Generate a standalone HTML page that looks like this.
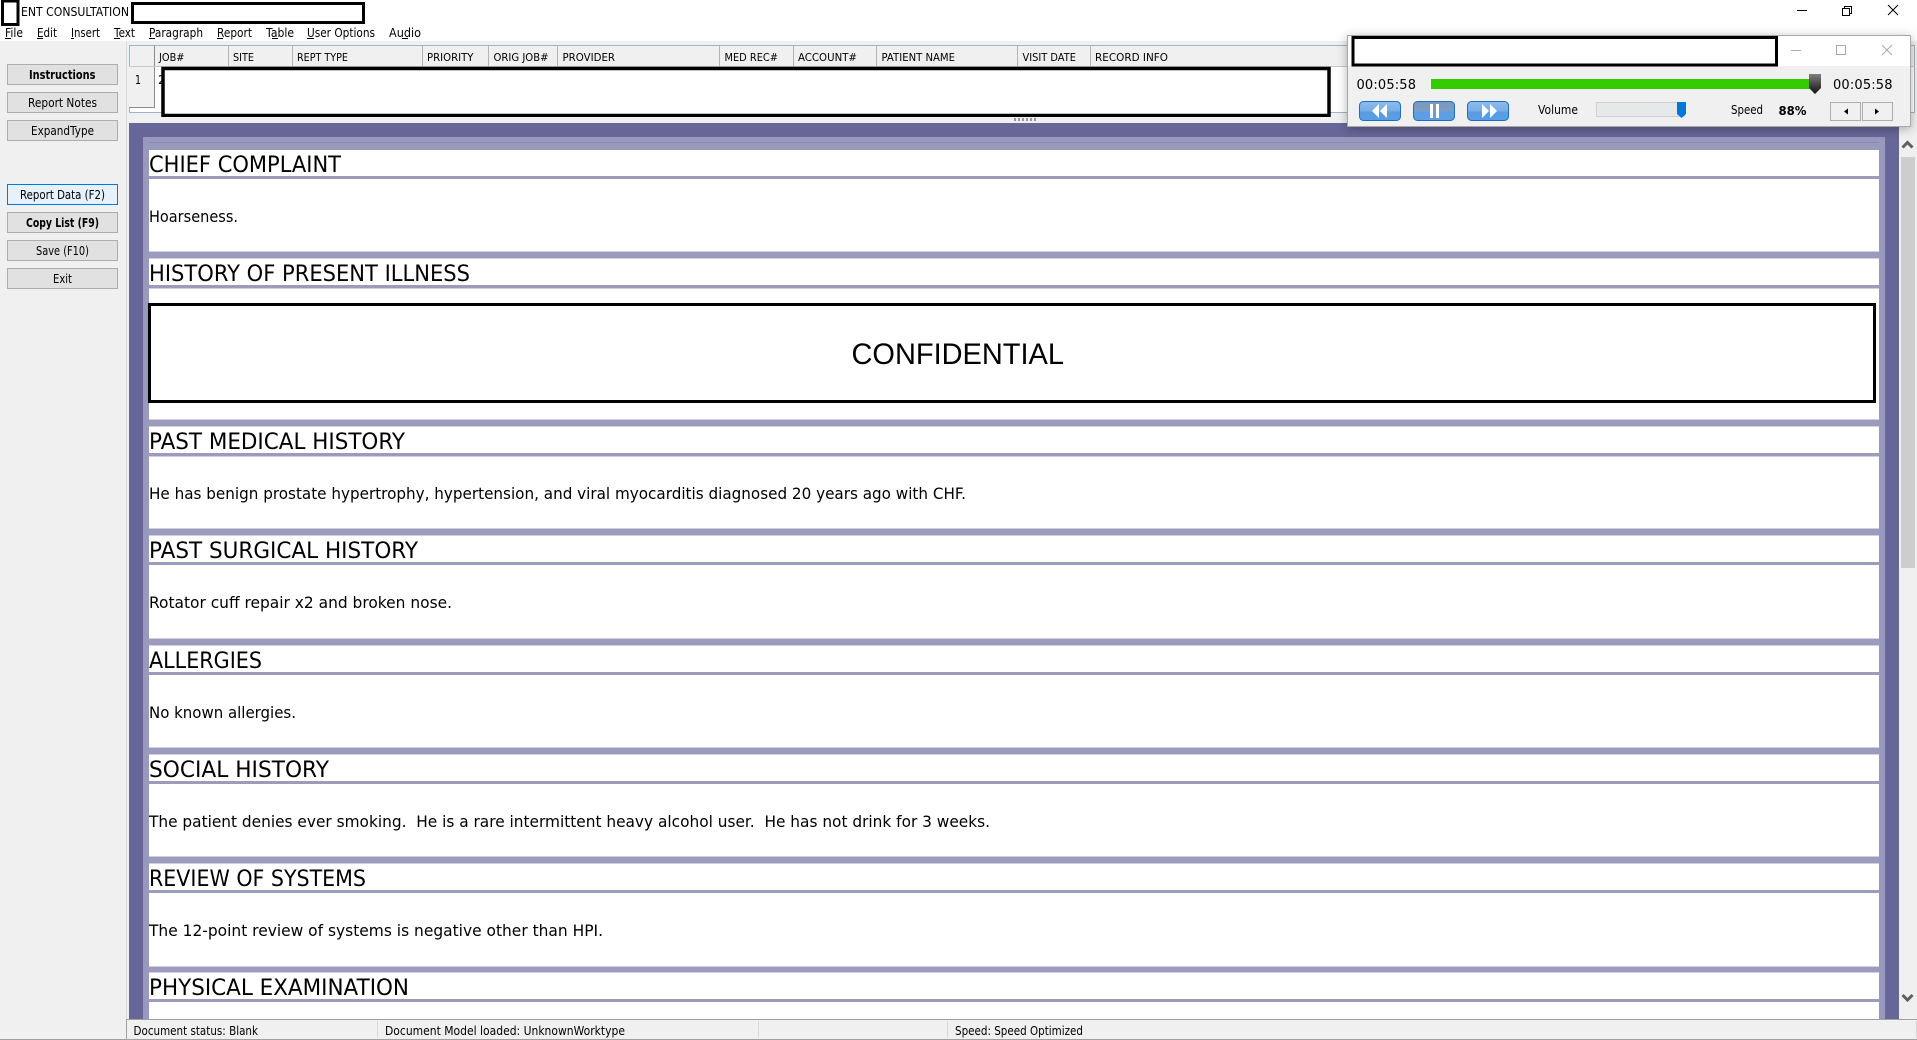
<!DOCTYPE html>
<html><head><meta charset="utf-8"><title>ENT CONSULTATION</title>
<style>
html,body{margin:0;padding:0;width:1917px;height:1040px;overflow:hidden;background:#fff}
svg{display:block;position:absolute;left:0;top:0}
text{font-family:"DejaVu Sans","Liberation Sans",sans-serif;fill:#000;white-space:pre;font-size:12px}
.h{font-size:22px}.b{font-size:16px}.m{font-size:12px}.g{font-size:11px}
.bb{font-weight:bold}
.t{font-size:13px}
</style></head><body>
<svg width="1917" height="1040" viewBox="0 0 1917 1040" xmlns="http://www.w3.org/2000/svg" shape-rendering="crispEdges">
<defs>
<linearGradient id="bl" x1="0" y1="0" x2="0" y2="1"><stop offset="0" stop-color="#8dbcec"/><stop offset=".5" stop-color="#78aee6"/><stop offset=".55" stop-color="#5a9ce2"/><stop offset="1" stop-color="#5a9de4"/></linearGradient>
<linearGradient id="pa" x1="0" y1="0" x2="0" y2="1"><stop offset="0" stop-color="#7d98bb"/><stop offset=".5" stop-color="#7b9cc4"/><stop offset=".55" stop-color="#5e9de0"/><stop offset="1" stop-color="#5e9fe4"/></linearGradient>
<linearGradient id="th" x1="0" y1="0" x2="0" y2="1"><stop offset="0" stop-color="#808080"/><stop offset="1" stop-color="#101010"/></linearGradient>
<filter id="sh" x="-5%" y="-20%" width="110%" height="140%"><feDropShadow dx="0" dy="2" stdDeviation="5" flood-color="#000" flood-opacity=".3"/></filter>
</defs>

<!-- base -->
<rect x="0" y="0" width="1917" height="41" fill="#fff"/>
<rect x="0" y="41" width="1917" height="999" fill="#f0f0f0"/>
<rect x="126" y="41" width="1" height="999" fill="#dcdcdc"/>

<!-- title -->
<rect x="2.5" y="1" width="15.5" height="23.5" fill="#fff" stroke="#000" stroke-width="3"/>
<text x="21" y="16" textLength="108" lengthAdjust="spacingAndGlyphs">ENT CONSULTATION</text>
<rect x="132.5" y="3.5" width="231" height="19" fill="#fff" stroke="#000" stroke-width="3"/>
<rect x="1797" y="10" width="10" height="1" fill="#000"/>
<rect x="1842.5" y="8.5" width="7" height="7" fill="none" stroke="#000"/>
<path d="M1844.5 8.5V6.5H1851.5V13.5H1849.5" fill="none" stroke="#000"/>
<path d="M1888 5L1898 15M1898 5L1888 15" stroke="#000" fill="none" shape-rendering="auto"/>

<!-- menu -->
<g class="m">
<text x="5" y="37" textLength="18" lengthAdjust="spacingAndGlyphs">File</text>
<text x="37" y="37" textLength="20" lengthAdjust="spacingAndGlyphs">Edit</text>
<text x="71" y="37" textLength="29" lengthAdjust="spacingAndGlyphs">Insert</text>
<text x="114" y="37" textLength="21" lengthAdjust="spacingAndGlyphs">Text</text>
<text x="149" y="37" textLength="54" lengthAdjust="spacingAndGlyphs">Paragraph</text>
<text x="217" y="37" textLength="35" lengthAdjust="spacingAndGlyphs">Report</text>
<text x="266" y="37" textLength="28" lengthAdjust="spacingAndGlyphs">Table</text>
<text x="307" y="37" textLength="68" lengthAdjust="spacingAndGlyphs">User Options</text>
<text x="389" y="37" textLength="32" lengthAdjust="spacingAndGlyphs">Audio</text>
</g>
<g fill="#000">
<rect x="5" y="38" width="6" height="1"/><rect x="37" y="38" width="6" height="1"/><rect x="71" y="38" width="3" height="1"/>
<rect x="114" y="38" width="6" height="1"/><rect x="149" y="38" width="6" height="1"/><rect x="217" y="38" width="6" height="1"/>
<rect x="272" y="38" width="6" height="1"/><rect x="307" y="38" width="7" height="1"/><rect x="402" y="38" width="6" height="1"/>
</g>

<!-- left buttons -->
<g fill="#e1e1e1" stroke="#adadad">
<rect x="7.5" y="64.5" width="110" height="20"/>
<rect x="7.5" y="92.5" width="110" height="20"/>
<rect x="7.5" y="120.5" width="110" height="20"/>
<rect x="7.5" y="212.5" width="110" height="20"/>
<rect x="7.5" y="240.5" width="110" height="20"/>
<rect x="7.5" y="268.5" width="110" height="20"/>
<rect x="7.5" y="184.5" width="110" height="20" fill="#e5f1fb" stroke="#0078d7"/>
</g>
<text class="bb" x="29" y="79" textLength="66.5" lengthAdjust="spacingAndGlyphs">Instructions</text>
<text x="28" y="107" textLength="69" lengthAdjust="spacingAndGlyphs">Report Notes</text>
<text x="31" y="135" textLength="63" lengthAdjust="spacingAndGlyphs">ExpandType</text>
<text x="20" y="199" textLength="85" lengthAdjust="spacingAndGlyphs">Report Data (F2)</text>
<text class="bb" x="26" y="227" textLength="73" lengthAdjust="spacingAndGlyphs">Copy List (F9)</text>
<text x="36" y="255" textLength="53" lengthAdjust="spacingAndGlyphs">Save (F10)</text>
<text x="53" y="283" textLength="19" lengthAdjust="spacingAndGlyphs">Exit</text>

<!-- grid -->
<rect x="129" y="45" width="1786" height="68" fill="#fff"/>
<rect x="129" y="46" width="1786" height="21" fill="#f0f0f0"/>
<rect x="129" y="45" width="1786" height="1" fill="#9fb4c8"/>
<rect x="129" y="112" width="1786" height="1" fill="#9fb4c8"/>
<rect x="129" y="45" width="1" height="68" fill="#9fb4c8"/>
<rect x="1914" y="45" width="1" height="68" fill="#9fb4c8"/>
<rect x="129" y="67" width="26" height="41" fill="#f0f0f0"/>
<rect x="154" y="46" width="1" height="62" fill="#8c8c8c"/>
<rect x="129" y="107" width="26" height="1" fill="#8c8c8c"/>
<g fill="#b4b4b4">
<rect x="228" y="46" width="1" height="21"/><rect x="292" y="46" width="1" height="21"/><rect x="422" y="46" width="1" height="21"/>
<rect x="488" y="46" width="1" height="21"/><rect x="557" y="46" width="1" height="21"/><rect x="719" y="46" width="1" height="21"/>
<rect x="793" y="46" width="1" height="21"/><rect x="876" y="46" width="1" height="21"/><rect x="1017" y="46" width="1" height="21"/>
<rect x="1090" y="46" width="1" height="21"/>
</g>
<rect x="129" y="66" width="1786" height="1" fill="#c8c8c8"/>
<g class="g">
<text class="g" x="159" y="61" textLength="25.5" lengthAdjust="spacingAndGlyphs">JOB#</text>
<text class="g" x="233" y="61" textLength="21" lengthAdjust="spacingAndGlyphs">SITE</text>
<text class="g" x="297" y="61" textLength="51" lengthAdjust="spacingAndGlyphs">REPT TYPE</text>
<text class="g" x="427" y="61" textLength="46.5" lengthAdjust="spacingAndGlyphs">PRIORITY</text>
<text class="g" x="493.5" y="61" textLength="55" lengthAdjust="spacingAndGlyphs">ORIG JOB#</text>
<text class="g" x="562.5" y="61" textLength="52.5" lengthAdjust="spacingAndGlyphs">PROVIDER</text>
<text class="g" x="724.5" y="61" textLength="53.5" lengthAdjust="spacingAndGlyphs">MED REC#</text>
<text class="g" x="798" y="61" textLength="59" lengthAdjust="spacingAndGlyphs">ACCOUNT#</text>
<text class="g" x="881.5" y="61" textLength="73.5" lengthAdjust="spacingAndGlyphs">PATIENT NAME</text>
<text class="g" x="1022.5" y="61" textLength="53.5" lengthAdjust="spacingAndGlyphs">VISIT DATE</text>
<text class="g" x="1095" y="61" textLength="73" lengthAdjust="spacingAndGlyphs">RECORD INFO</text>
</g>
<text x="135" y="84" textLength="6" lengthAdjust="spacingAndGlyphs">1</text>
<text x="158" y="84">2</text>
<rect x="163" y="68.5" width="1166" height="47" fill="#fff" stroke="#000" stroke-width="3.5" shape-rendering="auto"/>
<rect x="129" y="117" width="1770" height="6" fill="#f0f0f0"/>
<g fill="#9a9a9a">
<rect x="1014" y="118" width="2" height="3"/><rect x="1018" y="118" width="2" height="3"/><rect x="1022" y="118" width="2" height="3"/><rect x="1026" y="118" width="2" height="3"/><rect x="1030" y="118" width="2" height="3"/><rect x="1034" y="118" width="2" height="3"/>
</g>

<!-- document area -->
<rect x="129" y="123" width="1770" height="896" fill="#676699"/>
<rect x="143" y="137" width="1742" height="882" fill="#9998bd"/>
<rect x="149" y="142" width="1730" height="1" fill="#8a89b3"/>
<rect x="149" y="150" width="1730" height="869" fill="#fff"/>

<!-- bands & rules -->
<g fill="#9c9bbd">
<rect x="149" y="176" width="1730" height="3"/>
<rect x="149" y="252" width="1730" height="6"/>
<rect x="149" y="285" width="1730" height="3"/>
<rect x="149" y="420" width="1730" height="6"/>
<rect x="149" y="453" width="1730" height="3"/>
<rect x="149" y="529" width="1730" height="6"/>
<rect x="149" y="562" width="1730" height="3"/>
<rect x="149" y="639" width="1730" height="6"/>
<rect x="149" y="672" width="1730" height="3"/>
<rect x="149" y="748" width="1730" height="6"/>
<rect x="149" y="781" width="1730" height="3"/>
<rect x="149" y="857" width="1730" height="6"/>
<rect x="149" y="890" width="1730" height="3"/>
<rect x="149" y="967" width="1730" height="5"/>
<rect x="149" y="999" width="1730" height="3"/>
</g>
<g fill="#d0d0e2">
<rect x="149" y="251" width="1730" height="1"/><rect x="149" y="258" width="1730" height="1"/>
<rect x="149" y="419" width="1730" height="1"/><rect x="149" y="426" width="1730" height="1"/>
<rect x="149" y="528" width="1730" height="1"/><rect x="149" y="535" width="1730" height="1"/>
<rect x="149" y="638" width="1730" height="1"/><rect x="149" y="645" width="1730" height="1"/>
<rect x="149" y="747" width="1730" height="1"/><rect x="149" y="754" width="1730" height="1"/>
<rect x="149" y="856" width="1730" height="1"/><rect x="149" y="863" width="1730" height="1"/>
<rect x="149" y="966" width="1730" height="1"/><rect x="149" y="972" width="1730" height="1"/>
<rect x="149" y="288" width="1730" height="1"/><rect x="149" y="456" width="1730" height="1"/>
</g>

<!-- headings -->
<text class="h" x="149" y="172" textLength="192" lengthAdjust="spacingAndGlyphs">CHIEF COMPLAINT</text>
<text class="h" x="149" y="281" textLength="321" lengthAdjust="spacingAndGlyphs">HISTORY OF PRESENT ILLNESS</text>
<text class="h" x="149" y="449" textLength="256" lengthAdjust="spacingAndGlyphs">PAST MEDICAL HISTORY</text>
<text class="h" x="149" y="558" textLength="269" lengthAdjust="spacingAndGlyphs">PAST SURGICAL HISTORY</text>
<text class="h" x="149" y="668" textLength="113" lengthAdjust="spacingAndGlyphs">ALLERGIES</text>
<text class="h" x="149" y="777" textLength="180" lengthAdjust="spacingAndGlyphs">SOCIAL HISTORY</text>
<text class="h" x="149" y="886" textLength="217" lengthAdjust="spacingAndGlyphs">REVIEW OF SYSTEMS</text>
<text class="h" x="149" y="995" textLength="260" lengthAdjust="spacingAndGlyphs">PHYSICAL EXAMINATION</text>

<!-- bodies -->
<text class="b" x="149" y="222" textLength="89" lengthAdjust="spacingAndGlyphs">Hoarseness.</text>
<text class="b" x="149" y="499" textLength="817" lengthAdjust="spacingAndGlyphs">He has benign prostate hypertrophy, hypertension, and viral myocarditis diagnosed 20 years ago with CHF.</text>
<text class="b" x="149" y="608" textLength="303" lengthAdjust="spacingAndGlyphs">Rotator cuff repair x2 and broken nose.</text>
<text class="b" x="149" y="718" textLength="147" lengthAdjust="spacingAndGlyphs">No known allergies.</text>
<text class="b" x="149" y="827" textLength="841" lengthAdjust="spacingAndGlyphs">The patient denies ever smoking.  He is a rare intermittent heavy alcohol user.  He has not drink for 3 weeks.</text>
<text class="b" x="149" y="936" textLength="454" lengthAdjust="spacingAndGlyphs">The 12-point review of systems is negative other than HPI.</text>

<!-- confidential -->
<rect x="149.5" y="304.5" width="1725" height="97" fill="#fff" stroke="#000" stroke-width="3"/>
<text x="851.5" y="364" textLength="212.5" lengthAdjust="spacingAndGlyphs" style="font-family:'Liberation Sans',sans-serif;font-size:30px">CONFIDENTIAL</text>

<!-- scrollbar -->
<rect x="1899" y="123" width="18" height="896" fill="#f0f0f0"/>
<rect x="1901" y="157" width="14" height="411" fill="#cdcdcd"/>
<path d="M1902.5 147.5L1907.5 142.5L1912.5 147.5" fill="none" stroke="#606060" stroke-width="3" shape-rendering="auto"/>
<path d="M1902.5 995L1907.5 1000L1912.5 995" fill="none" stroke="#606060" stroke-width="3" shape-rendering="auto"/>

<!-- status -->
<rect x="127" y="1019" width="1790" height="1" fill="#a0a0a0"/>
<rect x="127" y="1020" width="1790" height="19" fill="#f0f0f0"/>
<rect x="0" y="1039" width="1917" height="1" fill="#a0a0a0"/>
<rect x="377" y="1021" width="1" height="17" fill="#d8d8d8"/>
<rect x="758" y="1021" width="1" height="17" fill="#d8d8d8"/>
<rect x="947" y="1021" width="1" height="17" fill="#d8d8d8"/>
<rect x="1916" y="1021" width="1" height="17" fill="#d8d8d8"/>
<rect x="126" y="1019" width="1" height="21" fill="#a0a0a0"/>
<text x="133.5" y="1035" textLength="124.5" lengthAdjust="spacingAndGlyphs">Document status: Blank</text>
<text x="385" y="1035" textLength="240" lengthAdjust="spacingAndGlyphs">Document Model loaded: UnknownWorktype</text>
<text x="955" y="1035" textLength="128" lengthAdjust="spacingAndGlyphs">Speed: Speed Optimized</text>

<!-- player window -->
<rect x="1347.5" y="35.5" width="563" height="91" fill="#f0f0f0" stroke="#a8a8a8" filter="url(#sh)"/>
<rect x="1348" y="36" width="562" height="30" fill="#fff"/>
<rect x="1353" y="37.5" width="423.5" height="27.5" fill="#fff" stroke="#000" stroke-width="3"/>
<rect x="1791" y="50" width="10" height="1" fill="#a8a8a8"/>
<rect x="1836.5" y="45.5" width="9" height="9" fill="none" stroke="#a8a8a8"/>
<path d="M1882 45L1892 55M1892 45L1882 55" stroke="#a8a8a8" fill="none" shape-rendering="auto"/>

<text class="t" x="1356.5" y="89" textLength="59.5" lengthAdjust="spacing">00:05:58</text>
<rect x="1431" y="79" width="383" height="10" fill="#33cc00"/>
<path d="M1809 74H1821V88L1815 94L1809 88Z" fill="url(#th)" shape-rendering="auto"/>
<text class="t" x="1833" y="89" textLength="59.5" lengthAdjust="spacing">00:05:58</text>

<rect x="1359.5" y="101.5" width="41" height="19" rx="4" fill="url(#bl)" stroke="#1a6ec4" shape-rendering="auto"/>
<path d="M1379 104L1372 111L1379 118ZM1387 104L1380 111L1387 118Z" fill="#fff" shape-rendering="auto"/>
<rect x="1413.5" y="101.5" width="41" height="19" rx="4" fill="url(#pa)" stroke="#1a6ec4" shape-rendering="auto"/>
<rect x="1430" y="104" width="3" height="14" fill="#fff"/><rect x="1436" y="104" width="3" height="14" fill="#fff"/>
<rect x="1467.5" y="101.5" width="41" height="19" rx="4" fill="url(#bl)" stroke="#1a6ec4" shape-rendering="auto"/>
<path d="M1482 104L1489 111L1482 118ZM1490 104L1497 111L1490 118Z" fill="#fff" shape-rendering="auto"/>

<text x="1538" y="114" textLength="40" lengthAdjust="spacingAndGlyphs">Volume</text>
<rect x="1596.5" y="102.5" width="88" height="14" fill="#e6e9e9" stroke="#d0d0d0"/>
<path d="M1677 102H1686V114L1681.5 118L1677 114Z" fill="#0078d7" shape-rendering="auto"/>
<text x="1731" y="114" textLength="32" lengthAdjust="spacingAndGlyphs">Speed</text>
<text class="bb" x="1778.5" y="115" textLength="28" lengthAdjust="spacingAndGlyphs">88%</text>
<rect x="1830.5" y="102.5" width="30" height="18" fill="#f0f0f0" stroke="#adadad"/>
<rect x="1862.5" y="102.5" width="30" height="18" fill="#f0f0f0" stroke="#adadad"/>
<path d="M1848 108.5V114.5L1844 111.5Z" fill="#000" shape-rendering="auto"/>
<path d="M1875 108.5V114.5L1879 111.5Z" fill="#000" shape-rendering="auto"/>
</svg>
</body></html>
